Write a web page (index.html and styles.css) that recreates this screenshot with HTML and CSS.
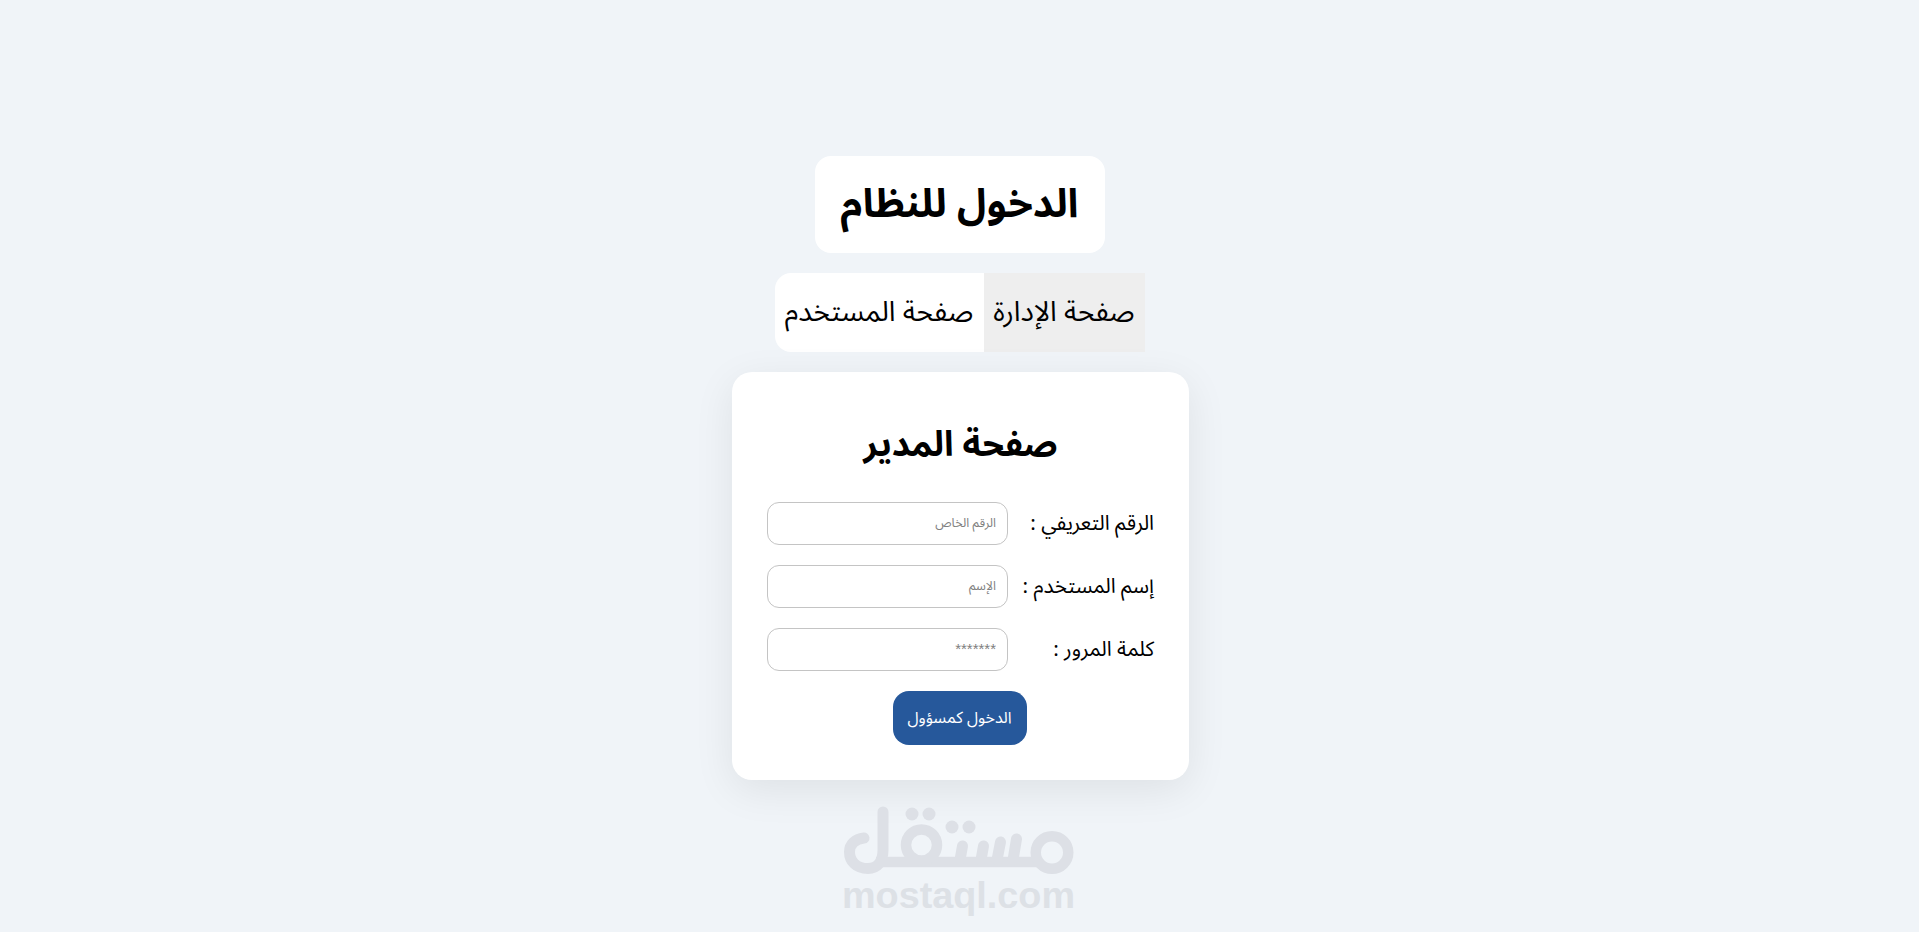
FILE: index.html
```html
<!DOCTYPE html>
<html lang="ar" dir="rtl">
<head>
<meta charset="utf-8">
<title>الدخول للنظام</title>
<link rel="stylesheet" href="styles.css">
</head>
<body>
<main class="page">
  <h1 class="title">الدخول للنظام</h1>
  <nav class="tabs">
    <button class="tab tab-active" type="button">صفحة الإدارة</button>
    <button class="tab tab-plain" type="button">صفحة المستخدم</button>
  </nav>
  <form class="card">
    <h2 class="card-title">صفحة المدير</h2>
    <div class="row">
      <label class="label" for="uid">الرقم التعريفي :</label>
      <input class="field" id="uid" type="text" placeholder="الرقم الخاص">
    </div>
    <div class="row">
      <label class="label" for="uname">إسم المستخدم :</label>
      <input class="field" id="uname" type="text" placeholder="الإسم">
    </div>
    <div class="row">
      <label class="label" for="pw">كلمة المرور :</label>
      <input class="field field-pw" id="pw" type="password" placeholder="*******">
    </div>
    <button class="submit" type="button">الدخول كمسؤول</button>
  </form>
</main>
<div class="watermark">
  <svg class="wm-logo" viewBox="840 800 240 80" aria-label="Mostaql logo" role="img">
    <g fill="none" stroke="#dde0e6" stroke-linecap="round" stroke-linejoin="round">
      <path stroke-width="11" d="M883 812V850C883 862 877 868.500 868 868.500C856 868.500 849.500 861 849.500 852C849.500 844 855 839 864 838"/>
      <path stroke-width="10.500" stroke-linecap="butt" d="M876 862H1040"/>
      <circle stroke-width="10.500" cx="921.500" cy="845" r="15.500"/>
      <path stroke-width="11" d="M960 860L962.500 846"/>
      <path stroke-width="11" d="M981 860L983.500 846"/>
      <path stroke-width="11" d="M997 860L1000.500 842"/>
      <path stroke-width="11" d="M1013 860L1016.500 839"/>
      <circle stroke-width="10.500" cx="1052" cy="852.500" r="16.250"/>
    </g>
    <g fill="#dde0e6">
      <circle cx="912" cy="814" r="6.500"/>
      <circle cx="929" cy="814" r="6.500"/>
      <circle cx="952" cy="827" r="6.500"/>
      <circle cx="969" cy="827" r="6.500"/>
    </g>
  </svg>
  <span class="wm-text" dir="ltr">mostaql.com</span>
</div>
</body>
</html>
```
FILE: styles.css
```css
* { box-sizing: border-box; }
html, body { margin: 0; height: 100%; }
body {
  background: #f0f4f8;
  font-family: "Noto Sans Arabic", "Noto Sans", "DejaVu Sans", sans-serif;
  color: #000;
  overflow: hidden;
}
.page {
  display: flex;
  flex-direction: column;
  align-items: center;
  padding-top: 156px;
  gap: 20px;
}
.title {
  margin: 0;
  width: 290px;
  height: 97px;
  background: #fff;
  border-radius: 16px;
  display: flex;
  align-items: center;
  justify-content: center;
  font-size: 40px;
  font-weight: 700;
}
.tabs {
  display: flex;
  width: 370px;
  height: 79px;
}
.tab {
  border: 0;
  font: inherit;
  font-size: 28px;
  color: #000;
  padding: 0;
  white-space: nowrap;
}
.tab-active { background: #eeeeee; flex: 0 0 161px; }
.tab-plain { background: #fff; flex: 1 1 auto; border-radius: 16px 0 0 16px; }
.card {
  width: 457px;
  height: 408px;
  margin-left: 2px;
  background: #fff;
  border-radius: 20px;
  box-shadow: 0 10px 40px rgba(0, 0, 0, 0.08);
  padding: 45px 35px 0;
  display: flex;
  flex-direction: column;
}
.card-title {
  margin: 4px 0 33px;
  text-align: center;
  font-size: 35px;
  line-height: 48px;
  font-weight: 700;
}
.row {
  display: flex;
  justify-content: space-between;
  align-items: center;
  height: 43px;
  margin-bottom: 20px;
}
.label { font-size: 20.800px; white-space: nowrap; padding-bottom: 2px; }
.field {
  width: 241px;
  height: 43px;
  border: 1px solid #c4c4c4;
  border-radius: 12px;
  padding: 0 11px 2px;
  font-family: inherit;
  font-size: 12.500px;
  background: #fff;
}
.field-pw { font-family: "Liberation Sans", sans-serif; font-size: 15px; }
.field::placeholder { color: #808080; opacity: 1; }
.submit {
  align-self: center;
  width: 134px;
  height: 54px;
  margin-right: 2px;
  background: #26589b;
  color: #fff;
  border: 0;
  border-radius: 16px;
  font: inherit;
  font-size: 16px;
}
.watermark {
  position: absolute;
  left: 840px;
  top: 800px;
  width: 240px;
  display: flex;
  flex-direction: column;
  align-items: center;
}
.wm-logo { width: 240px; height: 80px; display: block; }
.wm-text {
  font-family: "Liberation Sans", Arial, sans-serif;
  font-weight: 700;
  font-size: 37.800px;
  line-height: 38px;
  color: #dde1e6;
  margin-top: -4px;
  margin-right: 3px;
}
```
